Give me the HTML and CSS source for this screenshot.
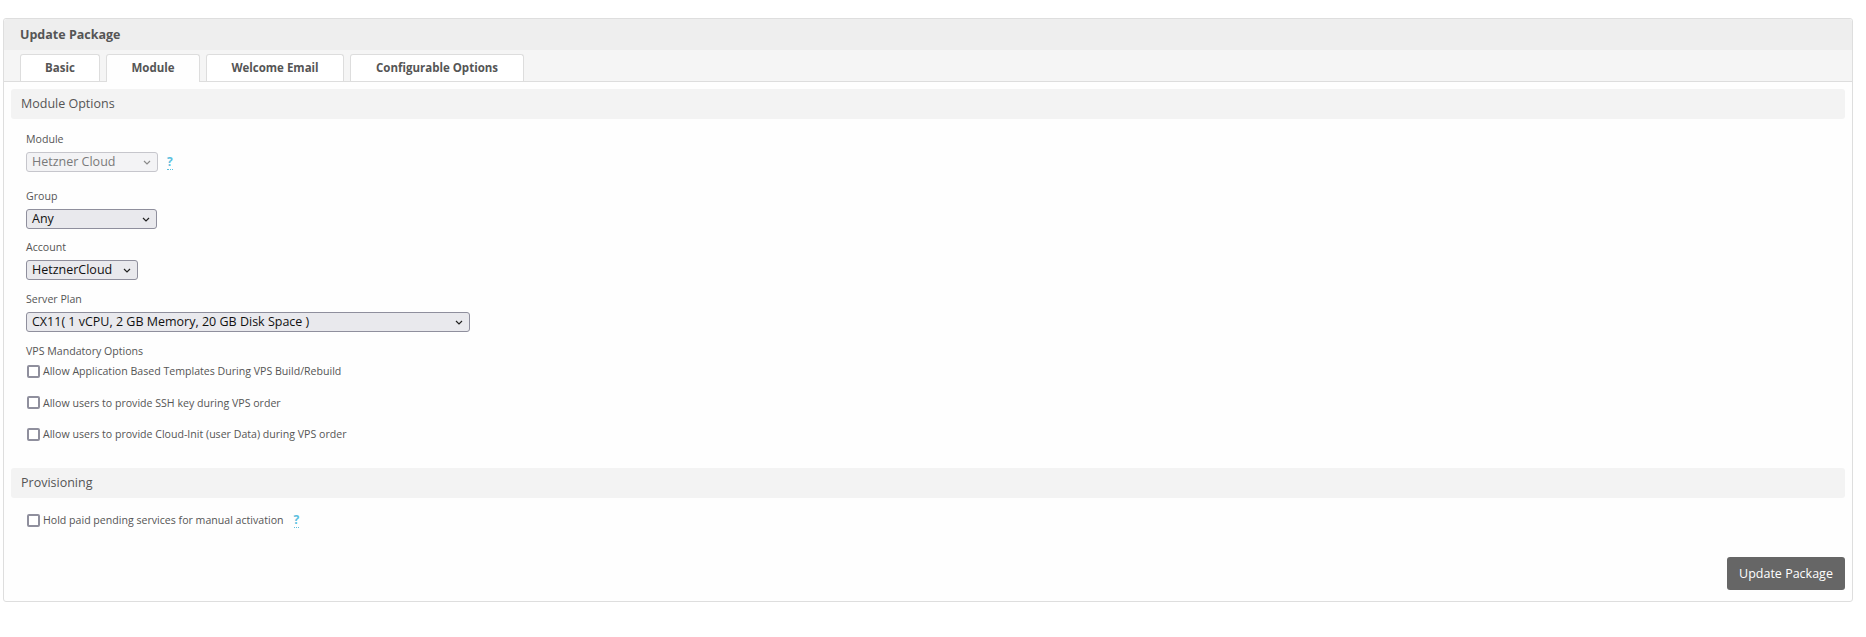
FILE: index.html
```html
<!DOCTYPE html>
<html lang="en">
<head>
<meta charset="utf-8">
<title>Update Package</title>
<link rel="stylesheet" href="styles.css">
</head>
<body>
<div class="panel">
  <div class="panel-head">Update Package</div>
  <div class="tabs">
    <div class="tab t-basic">Basic</div>
    <div class="tab t-module active">Module</div>
    <div class="tab t-email">Welcome Email</div>
    <div class="tab t-config">Configurable Options</div>
  </div>
  <div class="panel-body">
    <div class="section-bar">Module Options</div>
    <div class="fields">
      <div class="field field-module">
        <div class="label">Module</div>
        <div class="row">
          <div class="select disabled w-module"><span>Hetzner Cloud</span><svg class="chev" width="8" height="5" viewBox="0 0 8 5"><path d="M1 1 L4 4 L7 1" fill="none" stroke="#8a8a8a" stroke-width="1.2"/></svg></div>
          <span class="help">?</span>
        </div>
      </div>
      <div class="field field-group">
        <div class="label">Group</div>
        <div class="select w-group"><span>Any</span><svg class="chev" width="8" height="5" viewBox="0 0 8 5"><path d="M1 1 L4 4 L7 1" fill="none" stroke="#222" stroke-width="1.2"/></svg></div>
      </div>
      <div class="field">
        <div class="label">Account</div>
        <div class="select w-account"><span>HetznerCloud</span><svg class="chev" width="8" height="5" viewBox="0 0 8 5"><path d="M1 1 L4 4 L7 1" fill="none" stroke="#222" stroke-width="1.2"/></svg></div>
      </div>
      <div class="field">
        <div class="label">Server Plan</div>
        <div class="select w-plan"><span>CX11( 1 vCPU, 2 GB Memory, 20 GB Disk Space )</span><svg class="chev" width="8" height="5" viewBox="0 0 8 5"><path d="M1 1 L4 4 L7 1" fill="none" stroke="#222" stroke-width="1.2"/></svg></div>
      </div>
      <div class="field-vps">
        <div class="label">VPS Mandatory Options</div>
        <label class="check"><span class="box"></span><span>Allow Application Based Templates During VPS Build/Rebuild</span></label>
        <label class="check"><span class="box"></span><span>Allow users to provide SSH key during VPS order</span></label>
        <label class="check"><span class="box"></span><span>Allow users to provide Cloud-Init (user Data) during VPS order</span></label>
      </div>
    </div>
    <div class="section-bar bar-prov">Provisioning</div>
    <div class="fields fields-prov">
      <label class="check"><span class="box"></span><span>Hold paid pending services for manual activation</span><span class="help help-inline">?</span></label>
    </div>
    <div class="footer">
      <button class="btn">Update Package</button>
    </div>
  </div>
</div>
</body>
</html>
```

FILE: styles.css
```css
* { box-sizing: border-box; }
html, body {
  margin: 0;
  padding: 0;
  background: #fff;
  font-family: "Open Sans", "Liberation Sans", sans-serif;
  color: #555;
}
.panel {
  margin: 18px 0 0 3px;
  width: 1850px;
  border: 1px solid #dedede;
  border-radius: 3px;
  background: #fefefe;
}
.panel-head {
  height: 31px;
  line-height: 31px;
  padding-left: 16px;
  background: #eeeeee;
  font-size: 12.5px;
  font-weight: 700;
  color: #555;
  border-radius: 3px 3px 0 0;
}
.tabs {
  display: flex;
  align-items: flex-end;
  gap: 6px;
  height: 32px;
  padding: 4px 0 0 16px;
  background: #f5f5f5;
  border-bottom: 1px solid #dddddd;
}
.tab {
  height: 27px;
  line-height: 26px;
  text-align: center;
  background: #fff;
  border: 1px solid #dddddd;
  border-bottom: none;
  border-radius: 3px 3px 0 0;
  font-size: 11.5px;
  font-weight: 700;
  color: #555;
  white-space: nowrap;
}
.t-basic { width: 80px; }
.t-module { width: 94px; }
.t-email { width: 138px; }
.t-config { width: 174px; }
.tab.active {
  height: 28px;
  margin-bottom: -1px;
  background: #fefefe;
}
.panel-body {
  padding: 7px 7px 11px 7px;
}
.section-bar {
  height: 30px;
  line-height: 30px;
  padding-left: 10px;
  background: #f3f3f3;
  border-radius: 3px;
  font-size: 12.5px;
  color: #555;
}
.fields {
  padding: 13px 15px 0 15px;
}
.field {
  margin-bottom: 12px;
}
.field-module {
  margin-bottom: 17px;
}
.field-group {
  margin-bottom: 11px;
}
.label {
  height: 14px;
  line-height: 14px;
  font-size: 10.6px;
  color: #555;
  margin-bottom: 6px;
}
.row {
  display: flex;
  align-items: center;
  gap: 9px;
}
.select {
  display: flex;
  align-items: center;
  justify-content: space-between;
  height: 20px;
  padding: 0 6px 0 5px;
  background: #e9e9ed;
  border: 1px solid #8f8f9d;
  border-radius: 3px;
  font-size: 12.5px;
  line-height: 18px;
  color: #111;
  white-space: nowrap;
}
.select.disabled {
  background: #f3f3f5;
  border-color: #c6c6cc;
  color: #7a7a7a;
}
.chev { flex: none; }
.w-module { width: 132px; }
.w-group { width: 131px; }
.w-account { width: 112px; }
.w-plan { width: 444px; }
.help {
  color: #5bc0de;
  font-size: 12px;
  font-weight: 700;
  line-height: 14px;
  border-bottom: 1px dotted #5bc0de;
}
.help-inline { margin-left: 7px; }
.check {
  display: flex;
  align-items: center;
  gap: 3px;
  height: 14px;
  margin: 0 0 17.5px 1px;
  font-size: 10.6px;
  color: #555;
  white-space: nowrap;
}
.check:last-child { margin-bottom: 0; }
.box {
  flex: none;
  width: 13px;
  height: 13px;
  border: 2px solid #8f8f9d;
  border-radius: 2px;
  background: #fff;
}
.bar-prov {
  margin-top: 27px;
}
.fields-prov {
  padding-top: 15px;
}
.footer {
  display: flex;
  justify-content: flex-end;
  margin-top: 30px;
}
.btn {
  height: 33px;
  width: 118px;
  padding: 0;
  border: none;
  border-radius: 3px;
  background: #666666;
  color: #fff;
  font-family: "Open Sans", "Liberation Sans", sans-serif;
  font-size: 12.5px;
}
```
